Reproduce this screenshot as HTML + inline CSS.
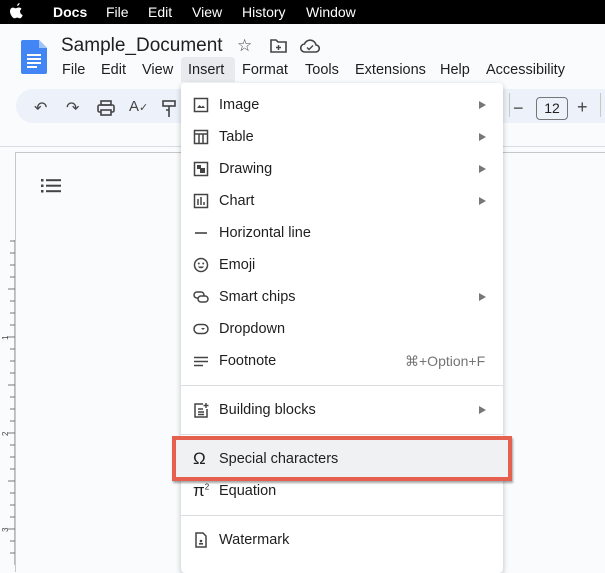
<!DOCTYPE html>
<html><head><meta charset="utf-8"><style>
*{margin:0;padding:0;box-sizing:border-box}
body{width:605px;height:565px;overflow:hidden;background:#f9fbfd;font-family:"Liberation Sans",Arial,sans-serif;color:#1f1f1f;position:relative}
.mb{position:absolute;left:0;top:0;width:605px;height:24px;background:#000;color:#fff;font-size:14px}
.mb span{position:absolute;top:4px}
.abs{position:absolute}
.menu span{position:absolute;top:62px;font-size:14.5px;color:#1f1f1f}
.tb{position:absolute;left:16px;top:89px;width:620px;height:34px;background:#edf2fa;border-radius:17px}
.page{position:absolute;left:15px;top:152px;width:600px;height:420px;background:#fafbfd;border:1px solid #c7c7c7;border-right:none;border-bottom:none}
.dd{position:absolute;left:181px;top:83px;width:322px;height:490px;background:#fff;box-shadow:0 2px 6px rgba(0,0,0,.25);border-radius:4px}
.it{position:absolute;left:38px;font-size:14.5px;color:#1f1f1f}
.ic{position:absolute;left:12px;width:16px;height:16px}
.ar{position:absolute;left:298px;width:0;height:0;border-left:7px solid #777;border-top:4px solid transparent;border-bottom:4px solid transparent}
.sep{position:absolute;left:0;width:322px;height:1px;background:#dadce0}
</style></head><body>
<div class="mb">
<svg class="abs" style="left:9px;top:3px" width="15" height="17" viewBox="0 0 15 17"><path d="M10.5 0c.2 1.3-.9 2.8-2.3 2.9-.2-1.2 1-2.7 2.3-2.9zM13.7 12.2c-.6 1.4-1.6 3.1-2.8 3.1-1.1 0-1.3-.7-2.7-.7s-1.7.7-2.8.7C4.2 15.3 1 12 1 8.2c0-2.3 1.5-3.6 3-3.6 1.1 0 1.900.7 2.8.7.8 0 1.7-.8 3-.8.5 0 1.9.1 2.8 1.4-2.4 1.4-2 4.8 1.1 6.3z" fill="#fff"/></svg>
<span style="left:53px;font-weight:bold">Docs</span><span style="left:106px">File</span><span style="left:148px">Edit</span><span style="left:192px">View</span><span style="left:242px">History</span><span style="left:306px">Window</span>
</div>
<svg class="abs" style="left:21px;top:40px" width="26" height="34" viewBox="0 0 26 34"><path d="M2 0h16l8 8v24a2 2 0 0 1-2 2H2a2 2 0 0 1-2-2V2a2 2 0 0 1 2-2z" fill="#4285f4"/><path d="M18 0v8h8z" fill="#a1c2fa"/><rect x="6" y="14" width="14" height="2" fill="#fff"/><rect x="6" y="18" width="14" height="2" fill="#fff"/><rect x="6" y="22" width="14" height="2" fill="#fff"/><rect x="6" y="26" width="10" height="2" fill="#fff"/></svg>
<div class="abs" style="left:61px;top:35px;font-size:19px;color:#1f1f1f">Sample_Document</div>
<div class="abs" style="left:237px;top:36px;font-size:17px;color:#444">☆</div>
<svg class="abs" style="left:270px;top:39px" width="17" height="14" viewBox="0 0 17 14"><path d="M1 1h5l2 2h8v10H1z" fill="none" stroke="#444" stroke-width="1.6"/><path d="M8.5 6v5M6 8.5h5" stroke="#444" stroke-width="1.4"/></svg>
<svg class="abs" style="left:300px;top:39px" width="20" height="14" viewBox="0 0 20 14"><path d="M5 13a4 4 0 0 1-.5-8A6 6 0 0 1 16 6a3.5 3.5 0 0 1-.5 7z" fill="none" stroke="#444" stroke-width="1.6"/><path d="M7 8.5l2 2 4-4" fill="none" stroke="#444" stroke-width="1.4"/></svg>
<div class="menu"><div class="abs" style="left:181px;top:57px;width:54px;height:25px;background:#e8eaed;border-radius:4px 4px 0 0"></div>
<span style="left:62px">File</span><span style="left:101px">Edit</span><span style="left:142px">View</span><span style="left:188px">Insert</span><span style="left:242px">Format</span><span style="left:305px">Tools</span><span style="left:355px">Extensions</span><span style="left:440px">Help</span><span style="left:486px">Accessibility</span></div>
<div class="tb"></div>
<div class="abs" style="left:34px;top:98px;font-size:16px;color:#444">↶</div>
<div class="abs" style="left:66px;top:98px;font-size:16px;color:#444">↷</div>
<svg class="abs" style="left:97px;top:100px" width="18" height="16" viewBox="0 0 18 16"><rect x="4" y="1" width="10" height="4" fill="none" stroke="#444" stroke-width="1.6"/><rect x="1" y="5" width="16" height="7" rx="1.5" fill="none" stroke="#444" stroke-width="1.6"/><rect x="4" y="10" width="10" height="5" fill="#edf2fa" stroke="#444" stroke-width="1.6"/></svg>
<div class="abs" style="left:129px;top:98px;font-size:15px;color:#444">A<span style="font-size:11px">✓</span></div>
<svg class="abs" style="left:162px;top:100px" width="14" height="18" viewBox="0 0 14 18"><rect x="1" y="1" width="12" height="5" fill="none" stroke="#444" stroke-width="1.6"/><path d="M7 6v4M4 10h3v7" fill="none" stroke="#444" stroke-width="1.6"/></svg>
<div class="abs" style="left:509px;top:93px;width:1px;height:24px;background:#c7c7c7"></div>
<div class="abs" style="left:513px;top:98px;font-size:18px;color:#444">−</div>
<div class="abs" style="left:536px;top:97px;width:32px;height:23px;border:1px solid #747775;border-radius:4px;font-size:14px;text-align:center;line-height:21px">12</div>
<div class="abs" style="left:577px;top:97px;font-size:18px;color:#444">+</div>
<div class="abs" style="left:600px;top:93px;width:1px;height:24px;background:#c7c7c7"></div>
<div class="abs" style="left:0;top:146px;width:605px;height:1px;background:#dadce0"></div>
<div class="page"></div>
<svg class="abs" style="left:41px;top:178px" width="20" height="16" viewBox="0 0 20 16"><g fill="#444"><rect x="0" y="1" width="2.5" height="2.5"/><rect x="0" y="6.5" width="2.5" height="2.5"/><rect x="0" y="12" width="2.5" height="2.5"/><rect x="5" y="1.2" width="15" height="2"/><rect x="5" y="6.7" width="15" height="2"/><rect x="5" y="12.2" width="15" height="2"/></g></svg>
<svg class="abs" style="left:0;top:240px" width="15" height="325" viewBox="0 0 15 325"><line x1="14.5" y1="0" x2="14.5" y2="325" stroke="#bbb"/>
<g stroke="#777">
<path d="M10 1h5M10 13h5M10 25h5M10 37h5M10 61h5M10 73h5M10 85h5M10 109h5M10 121h5M10 133h5M10 157h5M10 169h5M10 181h5M10 205h5M10 217h5M10 229h5M10 253h5M10 265h5M10 277h5M10 301h5M10 313h5"/>
<path d="M8 49h7M8 97h7M8 145h7M8 193h7M8 241h7M8 289h7"/></g>
<text x="4" y="100" font-size="8" fill="#444" transform="rotate(-90 6 98)" font-family="Liberation Sans">1</text>
<text x="4" y="196" font-size="8" fill="#444" transform="rotate(-90 6 194)" font-family="Liberation Sans">2</text>
<text x="4" y="292" font-size="8" fill="#444" transform="rotate(-90 6 290)" font-family="Liberation Sans">3</text></svg>
<div class="dd">
<svg class="ic" style="top:14px" viewBox="0 0 16 16"><rect x="1.5" y="1.5" width="13" height="13" fill="none" stroke="#444" stroke-width="1.5"/><path d="M4 11l2.5-3 2 2 1.5-1.5 2 2.5z" fill="#444"/></svg><div class="it" style="top:14px">Image</div><div class="ar" style="top:18px"></div>
<svg class="ic" style="top:46px" viewBox="0 0 16 16"><rect x="1.5" y="1.5" width="13" height="13" fill="none" stroke="#444" stroke-width="1.5"/><path d="M1.5 5h13M6 5v9.5M10 5v9.5" stroke="#444" stroke-width="1.5"/></svg><div class="it" style="top:46px">Table</div><div class="ar" style="top:50px"></div>
<svg class="ic" style="top:78px" viewBox="0 0 16 16"><rect x="1.5" y="1.5" width="13" height="13" fill="none" stroke="#444" stroke-width="1.5"/><rect x="4" y="4" width="4" height="4" fill="#444"/><rect x="7" y="7" width="5" height="5" fill="#444"/></svg><div class="it" style="top:78px">Drawing</div><div class="ar" style="top:82px"></div>
<svg class="ic" style="top:110px" viewBox="0 0 16 16"><rect x="1.5" y="1.5" width="13" height="13" fill="none" stroke="#444" stroke-width="1.5"/><path d="M5 6v6M8 4v8M11 9v3" stroke="#444" stroke-width="1.5"/></svg><div class="it" style="top:110px">Chart</div><div class="ar" style="top:114px"></div>
<svg class="ic" style="top:142px" viewBox="0 0 16 16"><path d="M2 8h12" stroke="#444" stroke-width="1.6"/></svg><div class="it" style="top:142px">Horizontal line</div>
<svg class="ic" style="top:174px" viewBox="0 0 16 16"><circle cx="8" cy="8" r="6.5" fill="none" stroke="#444" stroke-width="1.5"/><circle cx="5.8" cy="6.5" r="1" fill="#444"/><circle cx="10.2" cy="6.5" r="1" fill="#444"/><path d="M5 9.5a3.4 3.4 0 0 0 6 0z" fill="#444"/></svg><div class="it" style="top:174px">Emoji</div>
<svg class="ic" style="top:206px" viewBox="0 0 16 16"><rect x="1" y="3" width="10" height="6" rx="3" fill="none" stroke="#444" stroke-width="1.5"/><rect x="5" y="7" width="10" height="6" rx="3" fill="#fff" stroke="#444" stroke-width="1.5"/></svg><div class="it" style="top:206px">Smart chips</div><div class="ar" style="top:210px"></div>
<svg class="ic" style="top:238px" viewBox="0 0 16 16"><rect x="1" y="3.5" width="14" height="9" rx="4.5" fill="none" stroke="#444" stroke-width="1.5"/><path d="M8 7h4l-2 2z" fill="#444"/></svg><div class="it" style="top:238px">Dropdown</div>
<svg class="ic" style="top:270px" viewBox="0 0 16 16"><path d="M1 4.5h14M1 8.5h14M1 12.5h9" stroke="#444" stroke-width="1.5"/></svg><div class="it" style="top:270px">Footnote</div><div class="abs" style="left:224px;top:270px;font-size:14px;color:#757575">⌘+Option+F</div>
<div class="sep" style="top:302px"></div>
<svg class="ic" style="top:319px" viewBox="0 0 16 16"><path d="M10 2H2v13h12V7" fill="none" stroke="#444" stroke-width="1.5"/><path d="M5 7h5M5 10h6M5 12.5h6M13 1v5M10.5 3.5h5" stroke="#444" stroke-width="1.4"/></svg><div class="it" style="top:319px">Building blocks</div><div class="ar" style="top:323px"></div>
<div class="sep" style="top:351px"></div>
<div class="abs" style="left:-9px;top:353px;width:340px;height:45px;border:4px solid #e5604f;background:#eff1f3;box-shadow:1px 2px 2px rgba(0,0,0,.35)"></div>
<div class="it" style="left:12px;top:366px;font-size:17px;font-family:'Liberation Sans',sans-serif">Ω</div><div class="it" style="top:368px">Special characters</div>
<div class="it" style="left:12px;top:398px;font-size:17px;font-family:'Liberation Sans',sans-serif">π<sup style="font-size:8px">2</sup></div><div class="it" style="top:400px">Equation</div>
<div class="sep" style="top:432px"></div>
<svg class="ic" style="top:449px" viewBox="0 0 16 16"><path d="M3 1h7l3 3v11H3z" fill="none" stroke="#444" stroke-width="1.5"/><circle cx="8" cy="9" r="1.3" fill="#444"/><rect x="6" y="11" width="4" height="1.6" fill="#444"/></svg><div class="it" style="top:449px">Watermark</div>
</div>
</body></html>
